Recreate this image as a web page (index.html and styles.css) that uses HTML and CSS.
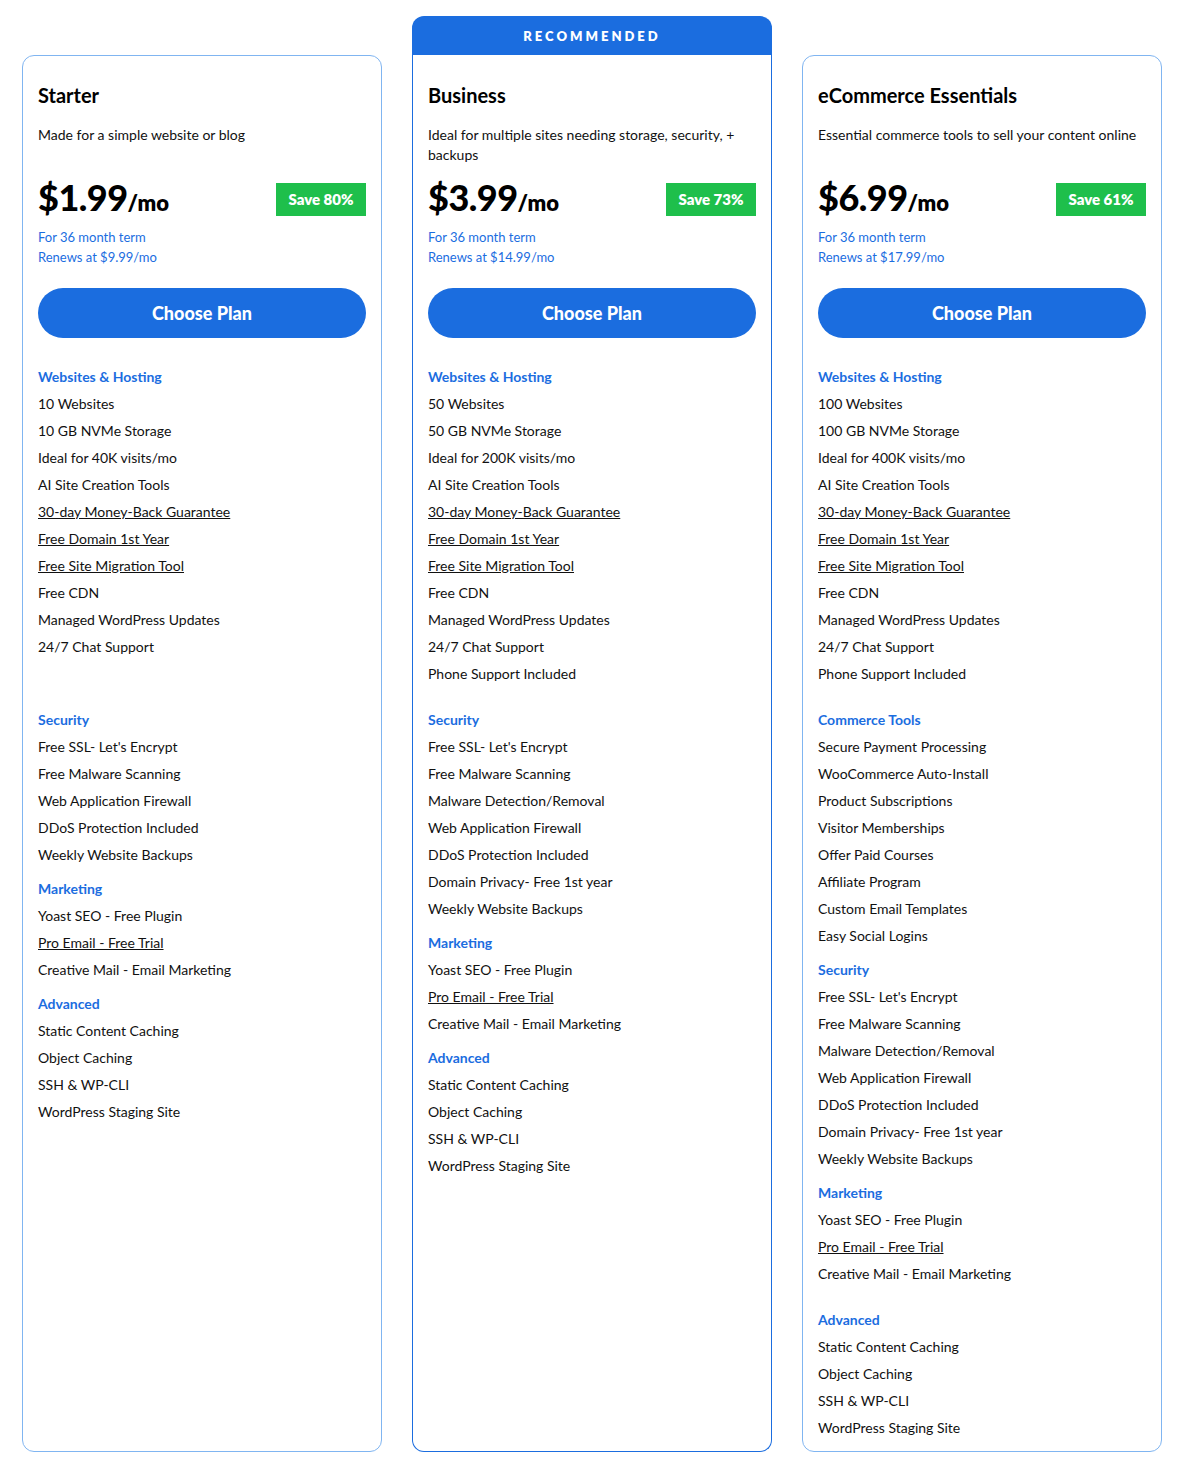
FILE: index.html
```html
<!DOCTYPE html>
<html lang="en">
<head>
    <meta charset="UTF-8">
    <meta name="viewport" content="width=device-width, initial-scale=1.0">
    <title>Hosting Plans</title>
    <link rel="stylesheet" href="styles.css">
</head>
<body>
    <div class="plans">

        <!-- Starter -->
        <div class="plan-col">
            <div class="plan">
                <h2 class="plan-name">Starter</h2>
                <p class="plan-desc">Made for a simple website or blog</p>
                <div class="price-row">
                    <div class="price">$1.99<span>/mo</span></div>
                    <div class="save">Save 80%</div>
                </div>
                <div class="terms">
                    <div>For 36 month term</div>
                    <div>Renews at $9.99/mo</div>
                </div>
                <button class="choose">Choose Plan</button>

                <div class="features">
                    <ul class="section first">
                        <li class="heading">Websites &amp; Hosting</li>
                        <li>10 Websites</li>
                        <li>10 GB NVMe Storage</li>
                        <li>Ideal for 40K visits/mo</li>
                        <li>AI Site Creation Tools</li>
                        <li><a href="#">30-day Money-Back Guarantee</a></li>
                        <li><a href="#">Free Domain 1st Year</a></li>
                        <li><a href="#">Free Site Migration Tool</a></li>
                        <li>Free CDN</li>
                        <li>Managed WordPress Updates</li>
                        <li>24/7 Chat Support</li>
                    </ul>
                    <ul class="section">
                        <li class="heading">Security</li>
                        <li>Free SSL- Let's Encrypt</li>
                        <li>Free Malware Scanning</li>
                        <li>Web Application Firewall</li>
                        <li>DDoS Protection Included</li>
                        <li>Weekly Website Backups</li>
                    </ul>
                    <ul class="section">
                        <li class="heading">Marketing</li>
                        <li>Yoast SEO - Free Plugin</li>
                        <li><a href="#">Pro Email - Free Trial</a></li>
                        <li>Creative Mail - Email Marketing</li>
                    </ul>
                    <ul class="section">
                        <li class="heading">Advanced</li>
                        <li>Static Content Caching</li>
                        <li>Object Caching</li>
                        <li>SSH &amp; WP-CLI</li>
                        <li>WordPress Staging Site</li>
                    </ul>
                </div>
            </div>
        </div>

        <!-- Business -->
        <div class="plan-col featured">
            <div class="ribbon">RECOMMENDED</div>
            <div class="plan">
                <h2 class="plan-name">Business</h2>
                <p class="plan-desc">Ideal for multiple sites needing storage, security, + backups</p>
                <div class="price-row">
                    <div class="price">$3.99<span>/mo</span></div>
                    <div class="save">Save 73%</div>
                </div>
                <div class="terms">
                    <div>For 36 month term</div>
                    <div>Renews at $14.99/mo</div>
                </div>
                <button class="choose">Choose Plan</button>

                <div class="features">
                    <ul class="section first">
                        <li class="heading">Websites &amp; Hosting</li>
                        <li>50 Websites</li>
                        <li>50 GB NVMe Storage</li>
                        <li>Ideal for 200K visits/mo</li>
                        <li>AI Site Creation Tools</li>
                        <li><a href="#">30-day Money-Back Guarantee</a></li>
                        <li><a href="#">Free Domain 1st Year</a></li>
                        <li><a href="#">Free Site Migration Tool</a></li>
                        <li>Free CDN</li>
                        <li>Managed WordPress Updates</li>
                        <li>24/7 Chat Support</li>
                        <li>Phone Support Included</li>
                    </ul>
                    <ul class="section">
                        <li class="heading">Security</li>
                        <li>Free SSL- Let's Encrypt</li>
                        <li>Free Malware Scanning</li>
                        <li>Malware Detection/Removal</li>
                        <li>Web Application Firewall</li>
                        <li>DDoS Protection Included</li>
                        <li>Domain Privacy- Free 1st year</li>
                        <li>Weekly Website Backups</li>
                    </ul>
                    <ul class="section">
                        <li class="heading">Marketing</li>
                        <li>Yoast SEO - Free Plugin</li>
                        <li><a href="#">Pro Email - Free Trial</a></li>
                        <li>Creative Mail - Email Marketing</li>
                    </ul>
                    <ul class="section">
                        <li class="heading">Advanced</li>
                        <li>Static Content Caching</li>
                        <li>Object Caching</li>
                        <li>SSH &amp; WP-CLI</li>
                        <li>WordPress Staging Site</li>
                    </ul>
                </div>
            </div>
        </div>

        <!-- eCommerce Essentials -->
        <div class="plan-col">
            <div class="plan">
                <h2 class="plan-name">eCommerce Essentials</h2>
                <p class="plan-desc">Essential commerce tools to sell your content online</p>
                <div class="price-row">
                    <div class="price">$6.99<span>/mo</span></div>
                    <div class="save">Save 61%</div>
                </div>
                <div class="terms">
                    <div>For 36 month term</div>
                    <div>Renews at $17.99/mo</div>
                </div>
                <button class="choose">Choose Plan</button>

                <div class="features">
                    <ul class="section first">
                        <li class="heading">Websites &amp; Hosting</li>
                        <li>100 Websites</li>
                        <li>100 GB NVMe Storage</li>
                        <li>Ideal for 400K visits/mo</li>
                        <li>AI Site Creation Tools</li>
                        <li><a href="#">30-day Money-Back Guarantee</a></li>
                        <li><a href="#">Free Domain 1st Year</a></li>
                        <li><a href="#">Free Site Migration Tool</a></li>
                        <li>Free CDN</li>
                        <li>Managed WordPress Updates</li>
                        <li>24/7 Chat Support</li>
                        <li>Phone Support Included</li>
                    </ul>
                    <ul class="section">
                        <li class="heading">Commerce Tools</li>
                        <li>Secure Payment Processing</li>
                        <li>WooCommerce Auto-Install</li>
                        <li>Product Subscriptions</li>
                        <li>Visitor Memberships</li>
                        <li>Offer Paid Courses</li>
                        <li>Affiliate Program</li>
                        <li>Custom Email Templates</li>
                        <li>Easy Social Logins</li>
                    </ul>
                    <ul class="section">
                        <li class="heading">Security</li>
                        <li>Free SSL- Let's Encrypt</li>
                        <li>Free Malware Scanning</li>
                        <li>Malware Detection/Removal</li>
                        <li>Web Application Firewall</li>
                        <li>DDoS Protection Included</li>
                        <li>Domain Privacy- Free 1st year</li>
                        <li>Weekly Website Backups</li>
                    </ul>
                    <ul class="section spaced">
                        <li class="heading">Marketing</li>
                        <li>Yoast SEO - Free Plugin</li>
                        <li><a href="#">Pro Email - Free Trial</a></li>
                        <li>Creative Mail - Email Marketing</li>
                    </ul>
                    <ul class="section">
                        <li class="heading">Advanced</li>
                        <li>Static Content Caching</li>
                        <li>Object Caching</li>
                        <li>SSH &amp; WP-CLI</li>
                        <li>WordPress Staging Site</li>
                    </ul>
                </div>
            </div>
        </div>

    </div>
</body>
</html>
```

FILE: styles.css
```css
body {
    font-family: Lato, "Open Sans", Arial, sans-serif;
    background-color: #fff;
    color: #111;
    margin: 0;
    padding: 0;
}

.plans {
    display: grid;
    grid-template-columns: repeat(3, 360px);
    gap: 30px;
    padding: 16px 22px 28px;
}

.plan-col {
    display: flex;
    flex-direction: column;
    padding-top: 39px;
}

.plan-col.featured {
    padding-top: 0;
}

.ribbon {
    height: 39px;
    line-height: 41px;
    background-color: #1b6ddf;
    color: #fff;
    text-align: center;
    font-size: 13px;
    font-weight: 800;
    letter-spacing: 3px;
    border-radius: 12px 12px 0 0;
}

.plan {
    flex: 1;
    border: 1px solid #80b5f1;
    border-radius: 12px;
    padding: 27px 15px 10px;
}

.featured .plan {
    border-color: #1b6ddf;
    border-top: none;
    border-radius: 0 0 12px 12px;
    padding-top: 28px;
}

.plan-name {
    margin: 0 0 18px;
    font-size: 20px;
    line-height: 24px;
    font-weight: 700;
    color: #000;
}

.plan-desc {
    margin: 0 0 18px;
    min-height: 40px;
    font-size: 14px;
    line-height: 20px;
}

.price-row {
    display: flex;
    justify-content: space-between;
    align-items: center;
    height: 33px;
}

.price {
    font-size: 36px;
    font-weight: 900;
    color: #000;
    letter-spacing: -0.5px;
    padding-bottom: 5px;
}

.price span {
    font-size: 22px;
    font-weight: 800;
    letter-spacing: 0;
}

.save {
    background-color: #1ebf4b;
    color: #fff;
    font-size: 15px;
    font-weight: 800;
    width: 90px;
    height: 33px;
    line-height: 33px;
    text-align: center;
}

.terms {
    margin-top: 11px;
    font-size: 13px;
    line-height: 20px;
    color: #1b6ddf;
}

.choose {
    display: block;
    width: 100%;
    height: 50px;
    margin-top: 21px;
    border: none;
    border-radius: 25px;
    background-color: #1b6ddf;
    color: #fff;
    font-family: inherit;
    font-size: 18px;
    font-weight: 900;
    cursor: pointer;
}

.features {
    margin-top: 24.5px;
}

.section {
    list-style: none;
    margin: 0 0 7px;
    padding: 0;
}

.section:last-child {
    margin-bottom: 0;
}

.section.first {
    min-height: 336px;
}

.section.spaced {
    padding-bottom: 12px;
}

.section li {
    font-size: 14px;
    line-height: 27px;
    white-space: nowrap;
}

.section .heading {
    color: #1b6ddf;
    font-weight: 700;
}

.section a {
    color: #111;
    text-decoration: underline;
}
```
